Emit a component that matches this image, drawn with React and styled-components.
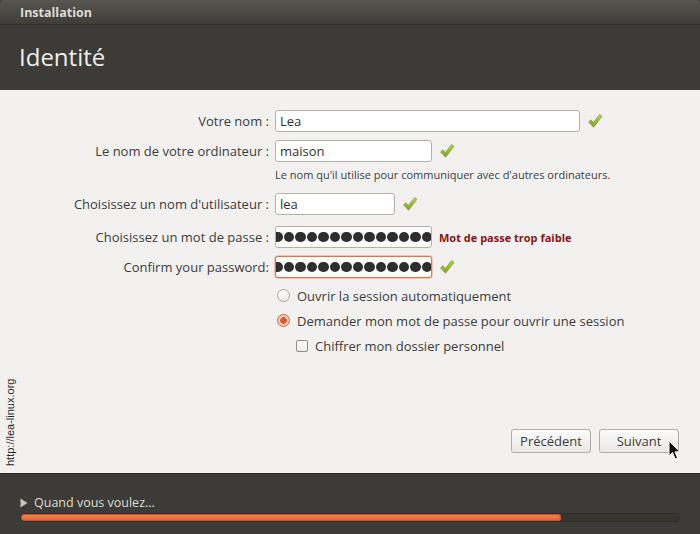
import React from "react";
import styled, { createGlobalStyle } from "styled-components";

const GlobalStyle = createGlobalStyle`
  html, body {
    margin: 0;
    padding: 0;
    background: #3c3b37;
  }
  body {
    font-family: "Open Sans", "Noto Sans", "DejaVu Sans", sans-serif;
  }
`;

const Window = styled.div`
  width: 700px;
  height: 534px;
  display: flex;
  flex-direction: column;
  background: #3c3b37;
  border-radius: 4px 4px 0 0;
  overflow: hidden;
  position: relative;
`;

const TitleBar = styled.div`
  height: 25px;
  display: flex;
  align-items: center;
  padding-left: 20px;
  background: linear-gradient(#57554f, #3e3d39);
  border-bottom: 1px solid #2f2e2b;
  color: #dfdbd2;
  font-size: 12.5px;
  font-weight: 700;
  box-sizing: border-box;
  flex-shrink: 0;
`;

const Header = styled.div`
  height: 65px;
  display: flex;
  align-items: center;
  padding-left: 19px;
  color: #eeeeec;
  font-size: 24px;
  flex-shrink: 0;
  padding-bottom: 2px;
  box-sizing: border-box;
`;

const Content = styled.div`
  flex: 1;
  background: #f2f1f0;
  display: flex;
  flex-direction: column;
  padding: 20px 21px 20px 0;
`;

const Form = styled.div`
  display: grid;
  grid-template-columns: 269px auto;
  column-gap: 6px;
  row-gap: 8px;
  align-items: center;
`;

const Label = styled.div`
  text-align: right;
  font-size: 13px;
  color: #3c3c3c;
  white-space: nowrap;
  margin-top: ${(p) => p.$mt || 0}px;
`;

const Field = styled.div`
  display: flex;
  align-items: center;
  gap: 7px;
  height: 22px;
  margin-top: ${(p) => p.$mt || 0}px;
`;

const Input = styled.div`
  width: ${(p) => p.w}px;
  height: 22px;
  box-sizing: border-box;
  border: 1px solid ${(p) => (p.focus ? "#d8764a" : "#b3b0aa")};
  box-shadow: ${(p) => (p.focus ? "0 0 0 0.5px #e89a77" : "none")};
  border-radius: 3px;
  background: #fff;
  display: flex;
  align-items: center;
  padding-left: 4px;
  font-size: 13px;
  color: #333;
  overflow: hidden;
`;

const Dots = styled.div`
  display: flex;
  gap: 1px;
  margin-left: -8px;
  align-items: center;
`;

const Dot = styled.span`
  width: 10.5px;
  height: 10.5px;
  border-radius: 50%;
  background: #2e2e2e;
  flex-shrink: 0;
`;

const Caret = styled.span`
  width: 1px;
  height: 15px;
  background: #222;
  margin-left: 1px;
`;

const Hint = styled.div`
  grid-column: 2;
  font-size: 11px;
  color: #3c3c3c;
  margin-top: -3px;
  margin-bottom: 3px;
`;

const Weak = styled.span`
  color: #8c1313;
  font-size: 11px;
  font-weight: 700;
`;

const Options = styled.div`
  margin-left: 277px;
  margin-top: 5px;
  display: flex;
  flex-direction: column;
`;

const Option = styled.div`
  display: flex;
  align-items: center;
  height: 25px;
  gap: 7px;
  font-size: 13px;
  color: #3c3c3c;
  padding-left: ${(p) => (p.sub ? 19 : 0)}px;
`;

const Radio = styled.span`
  width: 13px;
  height: 13px;
  border-radius: 50%;
  box-sizing: border-box;
  border: 1px solid ${(p) => (p.on ? "#c9633c" : "#a8a5a0")};
  background: ${(p) =>
    p.on
      ? "radial-gradient(circle, #dd5a2c 0 3px, #f4c5b0 3.5px, #fbe9e1 100%)"
      : "linear-gradient(#fff, #ecebe9)"};
`;

const Check = styled.span`
  width: 12px;
  height: 12px;
  border-radius: 2px;
  box-sizing: border-box;
  border: 1px solid #8f8c86;
  background: linear-gradient(#fff, #eeedeb);
`;

const Buttons = styled.div`
  margin-top: auto;
  display: flex;
  justify-content: flex-end;
  gap: 8px;
`;

const Button = styled.div`
  width: 80px;
  height: 24px;
  box-sizing: border-box;
  border: 1px solid #b1aea8;
  border-radius: 3px;
  background: linear-gradient(#fbfbfa, #e9e8e6);
  display: flex;
  align-items: center;
  justify-content: center;
  font-size: 13px;
  color: #3c3c3c;
`;

const Watermark = styled.div`
  position: absolute;
  left: 4px;
  top: 466px;
  transform: rotate(-90deg);
  transform-origin: left top;
  font-family: "Liberation Sans", Arial, sans-serif;
  font-size: 11px;
  line-height: 12px;
  color: #2a2a2a;
  white-space: nowrap;
`;

const Cursor = styled.svg`
  position: absolute;
  left: 668px;
  top: 440px;
`;

const Footer = styled.div`
  height: 61px;
  flex-shrink: 0;
  border-top: 1px solid #2b2a27;
  box-sizing: border-box;
  padding: 20px 20px 0 20px;
  display: flex;
  flex-direction: column;
  gap: 2px;
`;

const Expander = styled.div`
  display: flex;
  align-items: center;
  gap: 6px;
  color: #dfdbd2;
  font-size: 12.5px;
`;

const Trough = styled.div`
  height: 9px;
  border-radius: 5px;
  background: #35342f;
  border: 1px solid #2e2d29;
  box-sizing: border-box;
  overflow: hidden;
`;

const Fill = styled.div`
  height: 100%;
  border-radius: 5px;
  background: linear-gradient(#f08a5d, #e0622f);
  box-shadow: inset 0 0 0 1px #c85326;
`;

const Tick = () => (
  <svg width="16" height="16" viewBox="0 0 16 16">
    <defs>
      <linearGradient id="tk" x1="0" y1="0" x2="0" y2="1">
        <stop offset="0" stopColor="#b9d65a" />
        <stop offset="1" stopColor="#7fa51e" />
      </linearGradient>
    </defs>
    <path
      d="M1.5 9 L4 6.8 L6.3 9.6 L12.6 1.5 L15 3.4 L6.6 14.2 Z"
      fill="url(#tk)"
      stroke="#6e8f1c"
      strokeWidth="0.6"
      strokeLinejoin="round"
    />
  </svg>
);

const PasswordDots = ({ caret }) => (
  <Dots>
    {Array.from({ length: 14 }).map((_, i) => (
      <Dot key={i} />
    ))}
    {caret && <Caret />}
  </Dots>
);

export default function App() {
  return (
    <>
      <GlobalStyle />
      <Window>
        <TitleBar>Installation</TitleBar>
        <Header>Identité</Header>
        <Content>
          <Form>
            <Label>Votre nom :</Label>
            <Field>
              <Input w={305}>Lea</Input>
              <Tick />
            </Field>
            <Label>Le nom de votre ordinateur :</Label>
            <Field>
              <Input w={157}>maison</Input>
              <Tick />
            </Field>
            <Hint>Le nom qu'il utilise pour communiquer avec d'autres ordinateurs.</Hint>
            <Label>Choisissez un nom d'utilisateur :</Label>
            <Field>
              <Input w={120}>lea</Input>
              <Tick />
            </Field>
            <Label $mt={3}>Choisissez un mot de passe :</Label>
            <Field $mt={3}>
              <Input w={157}>
                <PasswordDots />
              </Input>
              <Weak>Mot de passe trop faible</Weak>
            </Field>
            <Label>Confirm your password:</Label>
            <Field>
              <Input w={157} focus>
                <PasswordDots caret />
              </Input>
              <Tick />
            </Field>
          </Form>
          <Options>
            <Option>
              <Radio />
              Ouvrir la session automatiquement
            </Option>
            <Option>
              <Radio on />
              Demander mon mot de passe pour ouvrir une session
            </Option>
            <Option sub>
              <Check />
              Chiffrer mon dossier personnel
            </Option>
          </Options>
          <Buttons>
            <Button>Précédent</Button>
            <Button>Suivant</Button>
          </Buttons>
        </Content>
        <Footer>
          <Expander>
            <svg width="8" height="10" viewBox="0 0 8 10">
              <path d="M0.5 0.5 L7.5 5 L0.5 9.5 Z" fill="#c8c4bc" />
            </svg>
            Quand vous voulez...
          </Expander>
          <Trough>
            <Fill style={{ width: `${(541 / 659) * 100}%` }} />
          </Trough>
        </Footer>
        <Watermark>http://lea-linux.org</Watermark>
        <Cursor width="14" height="21" viewBox="0 0 14 21">
          <path
            d="M1 1 L1 16 L4.5 12.5 L7.2 19 L9.6 18 L7 11.8 L12 11.8 Z"
            fill="#111"
            stroke="#fff"
            strokeWidth="1"
            strokeLinejoin="round"
          />
        </Cursor>
      </Window>
    </>
  );
}
